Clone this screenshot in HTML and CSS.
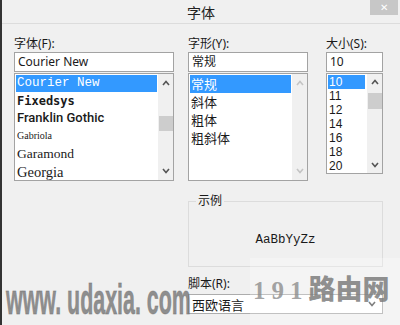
FILE: index.html
```html
<!DOCTYPE html>
<html lang="zh-CN">
<head>
    <meta charset="UTF-8">
    <meta name="viewport" content="width=device-width, initial-scale=1.0">
    <title>字体</title>
    <link rel="stylesheet" href="styles.css">
</head>
<body>
    <div class="window">
        <div class="titlebar">
            <span></span>
            <span class="title">字体</span>
            <span class="close">&#x2715;</span>
        </div>

        <div class="content">
            <div class="columns">
                <div class="col col-font">
                    <label class="label">字体(F):</label>
                    <div class="input">Courier New</div>
                    <div class="list list-font">
                        <div class="items">
                            <div class="item f-courier selected">Courier New</div>
                            <div class="item f-fixedsys">Fixedsys</div>
                            <div class="item f-franklin">Franklin Gothic</div>
                            <div class="item f-gabriola">Gabriola</div>
                            <div class="item f-garamond">Garamond</div>
                            <div class="item f-georgia">Georgia</div>
                        </div>
                        <div class="scroll">
                            <span class="arrow"><svg width="8" height="6" viewBox="0 0 8 6"><polyline points="1,5 4,1.5 7,5" /></svg></span>
                            <span class="thumb thumb-font"></span>
                            <span class="fill"></span>
                            <span class="arrow"><svg width="8" height="6" viewBox="0 0 8 6"><polyline points="1,1 4,4.5 7,1" /></svg></span>
                        </div>
                    </div>
                </div>

                <div class="col col-style">
                    <label class="label">字形(Y):</label>
                    <div class="input">常规</div>
                    <div class="list list-style">
                        <div class="items">
                            <div class="item cjk selected">常规</div>
                            <div class="item cjk">斜体</div>
                            <div class="item cjk">粗体</div>
                            <div class="item cjk">粗斜体</div>
                        </div>
                        <div class="scroll disabled">
                            <span class="arrow"><svg width="8" height="6" viewBox="0 0 8 6"><polyline points="1,5 4,1.5 7,5" /></svg></span>
                            <span class="fill"></span>
                            <span class="arrow"><svg width="8" height="6" viewBox="0 0 8 6"><polyline points="1,1 4,4.5 7,1" /></svg></span>
                        </div>
                    </div>
                </div>

                <div class="col col-size">
                    <label class="label">大小(S):</label>
                    <div class="input">10</div>
                    <div class="list list-size">
                        <div class="items">
                            <div class="item size selected">10</div>
                            <div class="item size">11</div>
                            <div class="item size">12</div>
                            <div class="item size">14</div>
                            <div class="item size">16</div>
                            <div class="item size">18</div>
                            <div class="item size">20</div>
                        </div>
                        <div class="scroll">
                            <span class="arrow"><svg width="8" height="6" viewBox="0 0 8 6"><polyline points="1,5 4,1.5 7,5" /></svg></span>
                            <span class="thumb thumb-size"></span>
                            <span class="fill"></span>
                            <span class="arrow"><svg width="8" height="6" viewBox="0 0 8 6"><polyline points="1,1 4,4.5 7,1" /></svg></span>
                        </div>
                    </div>
                </div>
            </div>

            <div class="lower">
                <fieldset class="sample">
                    <legend>示例</legend>
                    <div class="sample-text">AaBbYyZz</div>
                </fieldset>

                <label class="label script-label">脚本(R):</label>
                <div class="select">
                    <span>西欧语言</span>
                    <svg width="8" height="6" viewBox="0 0 8 6"><polyline points="1,1 4,4.5 7,1" /></svg>
                </div>
            </div>
        </div>

        <!-- watermarks lying over the dialog -->
        <div class="patch"></div>
        <div class="mark-left">www. udaxia. com</div>
        <div class="mark-right"><span class="digits">191</span><span class="name">路由网</span></div>
    </div>
</body>
</html>
```

FILE: styles.css
```css
body {
    margin: 0;
    font-family: "Noto Sans", "Noto Sans CJK SC", sans-serif;
    color: #1a1a1a;
}
.window {
    position: relative;
    width: 400px;
    height: 325px;
    box-sizing: border-box;
    border-left: 2px solid #333;
    background: #f0f0f0;
    overflow: hidden;
}
.titlebar {
    height: 23px;
    border-bottom: 1px solid #dcdcdc;
    display: grid;
    grid-template-columns: 1fr auto 1fr;
}
.title {
    align-self: center;
    font-family: "Noto Sans CJK SC", sans-serif;
    font-size: 14px;
    line-height: 16px;
    color: #222;
}
.close {
    justify-self: end;
    width: 28px;
    height: 15px;
    margin-right: 2px;
    background: #c7c7c7;
    color: #fff;
    font-size: 10px;
    line-height: 15px;
    text-align: center;
}
.content {
    padding: 13px 0 0 12px;
}
.columns {
    display: flex;
}
.col-font {
    width: 160px;
    margin-right: 14px;
}
.col-style {
    width: 120px;
    margin-right: 18px;
}
.col-size {
    width: 57px;
}
.label {
    display: block;
    font-size: 12px;
    line-height: 14px;
    height: 14px;
    margin-bottom: 1px;
}
.input {
    height: 20px;
    box-sizing: border-box;
    border: 1px solid #a3a3a3;
    background: #fff;
    padding-left: 3px;
    font-size: 12px;
    line-height: 18px;
}
.list {
    margin-top: 1px;
    height: 108px;
    box-sizing: border-box;
    border: 1px solid #a3a3a3;
    background: #fff;
    display: flex;
}
.list-size {
    height: 101px;
}
.items {
    flex: 1;
    padding: 1px 1px 0;
    overflow: hidden;
    white-space: nowrap;
}
.item {
    height: 18px;
    line-height: 18px;
    padding-left: 1px;
}
.selected {
    background: #3399ff;
    color: #fff;
}
.f-courier {
    height: 17px;
    line-height: 17px;
    font-family: "Liberation Mono", monospace;
    font-size: 12.5px;
}
.f-fixedsys {
    height: 17px;
    font-family: "DejaVu Sans Mono", monospace;
    font-weight: bold;
    font-size: 12px;
}
.f-franklin {
    font-family: Roboto, sans-serif;
    font-weight: 500;
    font-size: 13px;
}
.f-gabriola {
    font-family: "Liberation Serif", serif;
    font-size: 10px;
}
.f-garamond {
    font-family: "Liberation Serif", serif;
    font-size: 13.5px;
}
.f-georgia {
    font-family: "Liberation Serif", serif;
    font-size: 14.5px;
}
.cjk {
    font-family: "Noto Sans CJK SC", sans-serif;
    font-size: 13px;
}
.size {
    height: 14px;
    line-height: 14px;
    font-family: "Liberation Sans", sans-serif;
    font-size: 12px;
}
.list-size .selected {
    width: 36px;
}
.scroll {
    width: 15px;
    background: #f0f0f0;
    display: flex;
    flex-direction: column;
    align-items: center;
}
.arrow {
    height: 18px;
    display: flex;
    align-items: center;
    justify-content: center;
}
.arrow polyline,
.select polyline {
    fill: none;
    stroke: #555;
    stroke-width: 1.6;
}
.disabled .arrow polyline {
    stroke: #c4c4c4;
}
.thumb {
    width: 14px;
    background: #cdcdcd;
}
.thumb-font {
    margin-top: 24px;
    height: 15px;
}
.list-size .arrow {
    height: 16px;
}
.thumb-size {
    margin-top: 3px;
    height: 16px;
}
.fill {
    flex: 1;
}
.lower {
    margin-left: 174px;
    width: 195px;
}
.sample {
    margin: 13px 0 0;
    padding: 0;
    border: 1px solid #dcdcdc;
}
.sample legend {
    margin-left: 7px;
    padding: 0 2px;
    font-size: 12px;
    line-height: 14px;
}
.sample-text {
    height: 52px;
    padding-top: 6px;
    display: flex;
    align-items: center;
    justify-content: center;
    font-family: "Liberation Mono", monospace;
    font-size: 12.5px;
}
.script-label {
    margin-top: 10px;
    margin-bottom: 3px;
}
.select {
    height: 20px;
    box-sizing: border-box;
    border: 1px solid #acacac;
    background: #fff;
    display: flex;
    align-items: center;
    justify-content: space-between;
    padding: 0 6px 0 3px;
    font-family: "Noto Sans CJK SC", sans-serif;
    font-size: 13px;
}
.patch {
    position: absolute;
    left: 248px;
    top: 258px;
    right: 0;
    bottom: 0;
    background: rgba(255, 255, 255, 0.25);
}
.mark-left {
    position: absolute;
    left: 4px;
    top: 278px;
    font-family: "Liberation Sans", sans-serif;
    font-weight: bold;
    font-size: 42px;
    line-height: 44px;
    color: rgba(115, 115, 115, 0.78);
    -webkit-text-stroke: 1px rgba(115, 115, 115, 0.5);
    white-space: nowrap;
    transform: scaleX(0.51);
    transform-origin: left top;
}
.mark-right {
    position: absolute;
    left: 251px;
    top: 273px;
    display: flex;
    align-items: baseline;
    white-space: nowrap;
    color: rgba(125, 125, 125, 0.85);
}
.digits {
    font-family: "Liberation Serif", serif;
    font-weight: bold;
    font-size: 25px;
    letter-spacing: 6px;
    color: rgba(140, 140, 140, 0.8);
}
.name {
    font-family: "Noto Sans CJK SC", sans-serif;
    font-weight: 900;
    font-size: 27px;
    line-height: 30px;
}
```
